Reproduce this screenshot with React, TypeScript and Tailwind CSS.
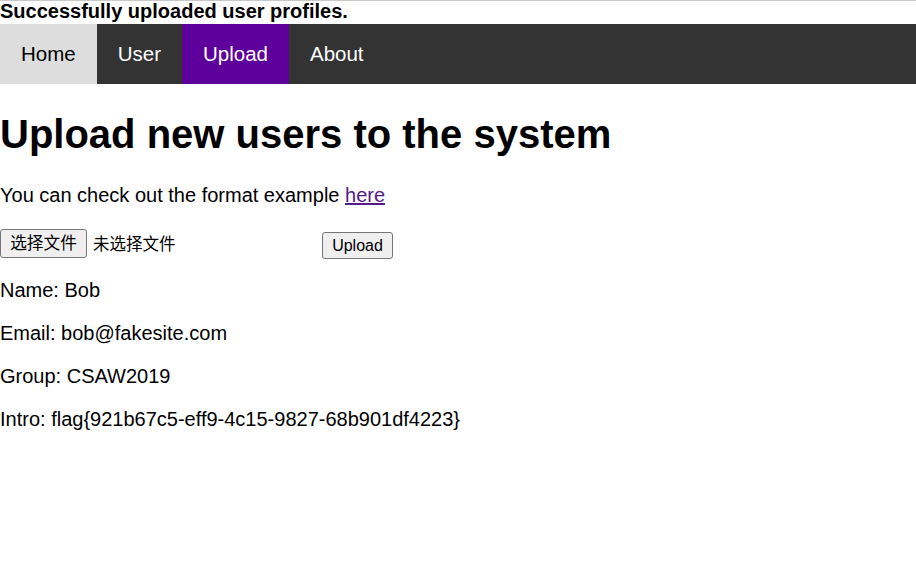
import React from 'react'

const navItems = [
  { label: 'Home', cls: 'bg-[#dddddd] text-black' },
  { label: 'User', cls: 'text-white' },
  { label: 'Upload', cls: 'bg-[#5e009c] text-white' },
  { label: 'About', cls: 'text-white' },
]

const profile = [
  'Name: Bob',
  'Email: bob@fakesite.com',
  'Group: CSAW2019',
  'Intro: flag{921b67c5-eff9-4c15-9827-68b901df4223}',
]

export default function App() {
  return (
    <div className="min-h-[562px] bg-white text-black text-[20px] font-['Liberation_Sans','Noto_Sans_CJK_SC',sans-serif]">
      {/* Status message */}
      <div className="border-t border-[#c8c8c8] h-[24px] font-bold leading-[20px]">
        Successfully uploaded user profiles.
      </div>

      {/* Top nav */}
      <nav className="flex h-[60px] bg-[#333333]">
        {navItems.map((item) => (
          <a key={item.label} href="#" className={`flex items-center px-[21px] text-[20.5px] ${item.cls}`}>
            {item.label}
          </a>
        ))}
      </nav>

      <h1 className="mt-[27px] mb-[27px] text-[40px] font-bold leading-[46px]">
        Upload new users to the system
      </h1>

      <p className="leading-[23px]">
        You can check out the format example{' '}
        <a href="#" className="text-[#551a8b] underline">
          here
        </a>
      </p>

      {/* Upload form */}
      <form className="mt-[20px] flex h-[32px] items-start">
        <div className="flex w-[318px] items-center mt-[2px]">
          <span className="flex h-[29px] w-[87px] items-center justify-center rounded-[3px] border border-[#767676] bg-[#efefef] text-[16.7px]">
            选择文件
          </span>
          <span className="ml-[6px] mt-[2px] text-[16.5px]">未选择文件</span>
        </div>
        <button
          type="button"
          className="ml-[4px] mt-[5px] flex h-[27px] w-[71px] items-center justify-center rounded-[3px] border border-[#767676] bg-[#efefef] text-[16px]"
        >
          Upload
        </button>
      </form>

      {profile.map((line) => (
        <p key={line} className="mt-[20px] leading-[23px]">
          {line}
        </p>
      ))}
    </div>
  )
}
